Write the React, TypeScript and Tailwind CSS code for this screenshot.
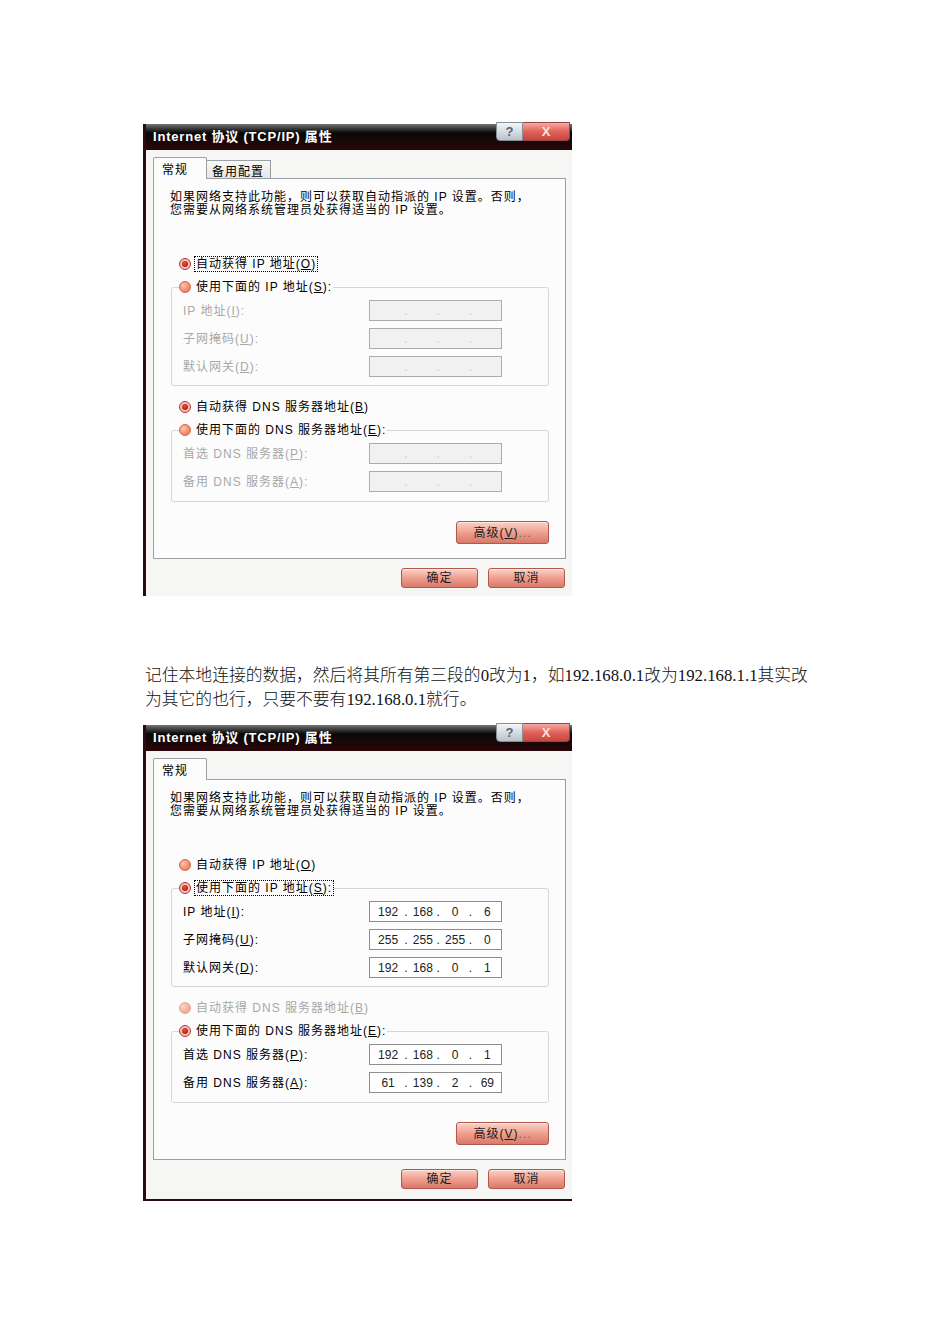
import React from 'react';

const UI = "font-['Liberation_Sans','Noto_Sans_CJK_SC',sans-serif]";

type Ip = string[] | null;

function Acc({ k }: { k: string }) {
  return (
    <>
      (<span className="underline">{k}</span>)
    </>
  );
}

function Radio({ checked, disabled }: { checked?: boolean; disabled?: boolean }) {
  if (checked) {
    return (
      <span className="w-[12px] h-[12px] shrink-0 rounded-full border border-[#a83a32] bg-[#f7c2b6] flex items-center justify-center">
        <span className="w-[6px] h-[6px] rounded-full bg-[radial-gradient(circle_at_40%_35%,#f04a3a,#a80808)]" />
      </span>
    );
  }
  return (
    <span
      className={`w-[12px] h-[12px] shrink-0 rounded-full border ${
        disabled
          ? 'border-[#eaa896] bg-[radial-gradient(circle_at_35%_35%,#fcd6c8,#f2a48c_75%)]'
          : 'border-[#d8664c] bg-[radial-gradient(circle_at_35%_35%,#fcc6ae,#ee7c5a_75%)]'
      }`}
    />
  );
}

function RadioRow({
  checked,
  disabled,
  focus,
  children,
}: {
  checked?: boolean;
  disabled?: boolean;
  focus?: boolean;
  children: React.ReactNode;
}) {
  return (
    <div className="flex items-center h-[16px] gap-[4px]">
      <Radio checked={checked} disabled={disabled} />
      <span
        className={`leading-[14px] px-px whitespace-nowrap ${focus ? 'outline-1 outline-dotted outline-black' : ''} ${
          disabled ? 'text-[#a8a8a8]' : 'text-black'
        }`}
      >
        {children}
      </span>
    </div>
  );
}

function IpBox({ value }: { value: Ip }) {
  const on = !!value;
  return (
    <div
      className={`w-[133px] h-[21px] border grid grid-cols-4 pl-[2px] items-center text-[12px] tracking-normal font-['Liberation_Sans',sans-serif] ${
        on ? 'bg-white border-[#8e8e8e] text-[#222]' : 'bg-[#f1f1f1] border-[#ababab] text-[#c6c6c6]'
      }`}
    >
      {[0, 1, 2, 3].map((i) => (
        <div key={i} className="flex items-center h-full">
          {i > 0 && <span className="w-[5px]">.</span>}
          <span className="flex-1 text-center">{value ? value[i] : ''}</span>
        </div>
      ))}
    </div>
  );
}

function Row({ label, value }: { label: React.ReactNode; value: Ip }) {
  return (
    <div className="grid grid-cols-[186px_133px] items-center h-[21px]">
      <span className={`whitespace-nowrap ${value ? 'text-black' : 'text-[#a8a8a8]'}`}>{label}</span>
      <IpBox value={value} />
    </div>
  );
}

function Group({
  legend,
  children,
  pb,
}: {
  legend: React.ReactNode;
  children: React.ReactNode;
  pb: string;
}) {
  return (
    <fieldset className={`border border-[#d6d6d6] rounded-[3px] p-0 ${pb}`}>
      <legend className="ml-[7px] p-0">{legend}</legend>
      <div className="pl-[11px] pt-[5px] flex flex-col gap-[7px]">{children}</div>
    </fieldset>
  );
}

function Btn({ children, w, h }: { children: React.ReactNode; w: string; h: string }) {
  return (
    <div
      className={`${w} ${h} rounded-[3px] border border-[#b2574e] bg-gradient-to-b from-[#f9d3c8] via-[#ef9f8f] to-[#d9796a] shadow-[inset_0_1px_0_#fde6de] flex items-center justify-center text-[12px] text-[#1c1c1c]`}
    >
      {children}
    </div>
  );
}

function Dialog({
  twoTabs,
  manual,
  ip,
  dns,
  last,
}: {
  twoTabs?: boolean;
  manual?: boolean;
  ip: Ip[];
  dns: Ip[];
  last?: boolean;
}) {
  return (
    <div className={`relative w-[429px] pt-[2px] ${UI} text-[12px] tracking-[1px]`}>
      {/* caption buttons */}
      <div className="absolute top-0 right-[2px] flex tracking-normal">
        <div className="w-[27px] h-[19px] rounded-bl-[4px] border border-[#8a8f96] bg-gradient-to-b from-[#f4f6f8] to-[#b9c2cc] flex items-center justify-center text-[13px] font-bold text-[#5a6470]">
          ?
        </div>
        <div className="w-[47px] h-[19px] rounded-br-[4px] border border-l-0 border-[#9b4242] bg-gradient-to-b from-[#f4a9a3] via-[#e0625a] to-[#c9463f] flex items-center justify-center text-[13px] font-bold text-[#fbe2de]">
          X
        </div>
      </div>

      <div className={`border-l-[3px] border-[#2c0b10] ${last ? 'border-b-[2px]' : ''}`}>
        <div className="h-[26px] bg-gradient-to-b from-[#777777] via-[#080808] via-35% to-[#2a0509] flex items-center pl-[7px] text-white text-[13px] font-bold tracking-[0.8px]">
          Internet 协议 (TCP/IP) 属性
        </div>

        <div className={`bg-[#f6f6f5] pt-[7px] ${last ? 'pb-[10px]' : 'pb-[8px]'}`}>
          <div className="flex items-end ml-[7px] h-[22px]">
            <div className="relative z-10 h-[22px] w-[54px] border border-b-0 border-[#9aa0a4] bg-[#fcfcfc] rounded-t-[2px] pl-[8px] pt-[3px]">
              常规
            </div>
            {twoTabs && (
              <div className="h-[19px] w-[64px] border border-l-0 border-[#9aa0a4] bg-gradient-to-b from-[#f8f8f8] to-[#e6e6e6] pl-[5px] pt-[2px]">
                备用配置
              </div>
            )}
          </div>

          <div className="-mt-px ml-[7px] w-[413px] border border-[#9aa0a4] bg-[#fcfcfc] pl-[17px] pr-[16px] pt-[12px] pb-[14px] flex flex-col">
            <p className="leading-[13px] -ml-px whitespace-nowrap">
              如果网络支持此功能，则可以获取自动指派的 IP 设置。否则，
              <br />
              您需要从网络系统管理员处获得适当的 IP 设置。
            </p>

            <div className="mt-[39px] pl-[8px]">
              <RadioRow checked={!manual} focus={!manual}>
                自动获得 IP 地址<Acc k="O" />
              </RadioRow>
            </div>
            <div className="mt-[7px]">
              <Group
                pb="pb-[8px]"
                legend={
                  <RadioRow checked={manual} focus={manual}>
                    使用下面的 IP 地址<Acc k="S" />:
                  </RadioRow>
                }
              >
                <Row label={<>IP 地址<Acc k="I" />:</>} value={ip[0]} />
                <Row label={<>子网掩码<Acc k="U" />:</>} value={ip[1]} />
                <Row label={<>默认网关<Acc k="D" />:</>} value={ip[2]} />
              </Group>
            </div>

            <div className="mt-[13px] pl-[8px]">
              <RadioRow checked={!manual} disabled={manual}>
                自动获得 DNS 服务器地址<Acc k="B" />
              </RadioRow>
            </div>
            <div className="mt-[7px]">
              <Group
                pb="pb-[9px]"
                legend={
                  <RadioRow checked={manual}>
                    使用下面的 DNS 服务器地址<Acc k="E" />:
                  </RadioRow>
                }
              >
                <Row label={<>首选 DNS 服务器<Acc k="P" />:</>} value={dns[0]} />
                <Row label={<>备用 DNS 服务器<Acc k="A" />:</>} value={dns[1]} />
              </Group>
            </div>

            <div className="mt-[19px] self-end">
              <Btn w="w-[93px]" h="h-[23px]">
                高级<Acc k="V" />
                <span className="text-[#6a6a6a]">...</span>
              </Btn>
            </div>
          </div>

          <div className="mt-[9px] mr-[7px] flex justify-end gap-[10px]">
            <Btn w="w-[77px]" h="h-[20px]">确定</Btn>
            <Btn w="w-[77px]" h="h-[20px]">取消</Btn>
          </div>
        </div>
      </div>
    </div>
  );
}

export default function App() {
  return (
    <div className="w-[950px] min-h-[1344px] bg-white pt-[122px] pl-[143px]">
      <Dialog twoTabs ip={[null, null, null]} dns={[null, null]} />

      <p className="mt-[68px] ml-[2px] w-[700px] whitespace-nowrap text-[16.8px] leading-[24px] font-light text-[#111] font-['Liberation_Serif','Noto_Sans_CJK_SC',serif]">
        记住本地连接的数据，然后将其所有第三段的0改为1，如192.168.0.1改为192.168.1.1其实改
        <br />
        为其它的也行，只要不要有192.168.0.1就行。
      </p>

      <div className="mt-[11px]">
        <Dialog
          manual
          last
          ip={[
            ['192', '168', '0', '6'],
            ['255', '255', '255', '0'],
            ['192', '168', '0', '1'],
          ]}
          dns={[
            ['192', '168', '0', '1'],
            ['61', '139', '2', '69'],
          ]}
        />
      </div>
    </div>
  );
}
